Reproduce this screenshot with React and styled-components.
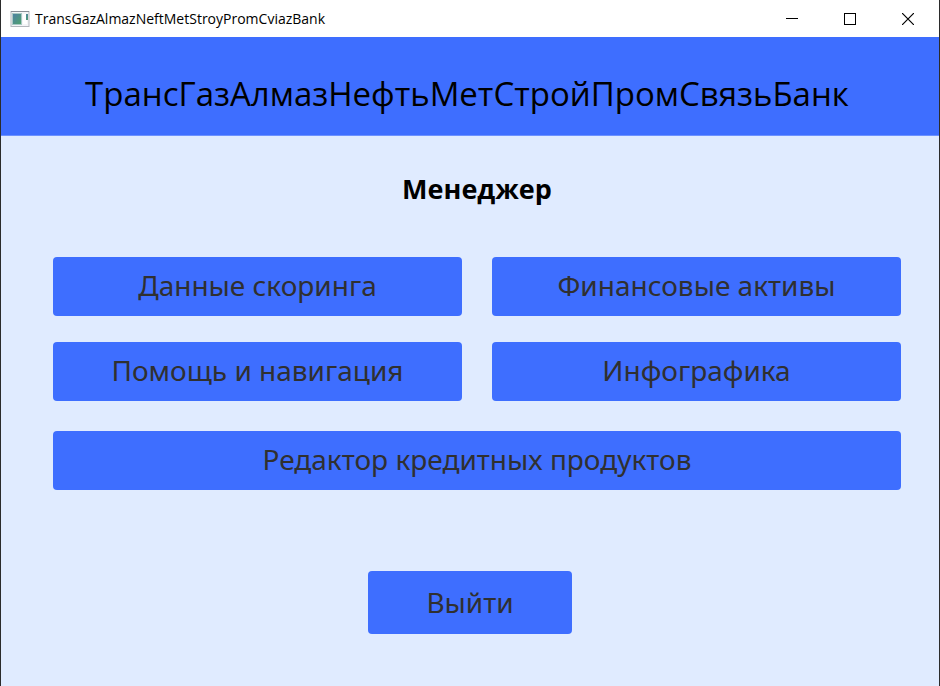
import React from "react";
import styled, { createGlobalStyle } from "styled-components";

const GlobalStyle = createGlobalStyle`
  * { box-sizing: border-box; }
  body { margin: 0; background: #e0ebff; }
`;

const Window = styled.div`
  display: flex;
  flex-direction: column;
  min-height: 100vh;
  border: 1px solid #2b2b2b;
  border-width: 0 1px;
  background: #e0ebff;
  color: #000;
`;

const TitleBar = styled.header`
  display: flex;
  align-items: center;
  height: 37px;
  padding: 0 2px 0 9px;
  background: #fff;
`;

const WindowTitle = styled.span`
  flex: 1;
  margin-left: 5px;
  font: 14px/20px "Open Sans", "Noto Sans", sans-serif;
`;

const WindowButton = styled.button`
  display: flex;
  align-items: center;
  justify-content: center;
  width: 58px;
  height: 36px;
  padding: 0;
  border: 0;
  background: transparent;
`;

const Banner = styled.div`
  display: flex;
  align-items: center;
  justify-content: center;
  height: 99px;
  padding: 18px 6px 0 0;
  border-bottom: 1px solid #6c91ff;
  background: #3e6eff;
`;

const BankName = styled.h1`
  margin: 0;
  font: 400 33px/48px "Comic Sans MS", "Comic Neue", "Open Sans", sans-serif;
  white-space: nowrap;
`;

const Content = styled.main`
  padding: 33px 38px 0 52px;
`;

const Role = styled.h2`
  margin: 0;
  font: 700 27px/44px "Comic Sans MS", "Comic Neue", "Open Sans", sans-serif;
  text-align: center;
`;

const Menu = styled.nav`
  display: grid;
  grid-template-columns: 1fr 1fr;
  gap: 26px 30px;
  margin-top: 44px;
`;

const ActionButton = styled.button`
  grid-column: ${(p) => (p.$wide ? "1 / -1" : "auto")};
  height: 59px;
  margin-top: ${(p) => (p.$wide ? "4px" : "0")};
  padding: 0 0 4px;
  border: 0;
  border-radius: 4px;
  background: #3e6eff;
  color: #303030;
  font: 28px "Noto Sans", sans-serif;
`;

const Footer = styled.footer`
  display: flex;
  justify-content: center;
  padding: 81px 0 52px;
`;

const ExitButton = styled(ActionButton)`
  width: 204px;
  height: 63px;
  padding: 0 0 2px;
`;

export default function App() {
  return (
    <>
      <GlobalStyle />
      <Window>
        <TitleBar>
          <svg width="20" height="16" viewBox="0 0 20 16" aria-hidden="true">
            <defs>
              <linearGradient id="pane" x1="0" y1="0" x2="1" y2="1">
                <stop offset="0" stopColor="#4f7fa6" />
                <stop offset="1" stopColor="#4fa36c" />
              </linearGradient>
            </defs>
            <rect x="1" y=".5" width="18" height="15" fill="#f4f5f7" stroke="#b4b7bd" />
            <path d="M1 .5h18" stroke="#8b8f96" />
            <rect x="2.5" y="2.5" width="9" height="11" fill="url(#pane)" stroke="#a9c9c4" />
            <rect x="13" y="3" width="4" height="10" fill="#fff" />
            <rect x="16" y="3" width="2" height="6" fill="url(#pane)" />
          </svg>
          <WindowTitle>TransGazAlmazNeftMetStroyPromCviazBank</WindowTitle>
          <WindowButton aria-label="Minimize">
            <svg width="12" height="12" viewBox="0 0 12 12"><path d="M0 5.5h12" stroke="#000" /></svg>
          </WindowButton>
          <WindowButton aria-label="Maximize">
            <svg width="12" height="12" viewBox="0 0 12 12"><rect x=".5" y=".5" width="11" height="11" fill="none" stroke="#000" /></svg>
          </WindowButton>
          <WindowButton aria-label="Close">
            <svg width="12" height="12" viewBox="0 0 12 12"><path d="M0 0l12 12M12 0L0 12" stroke="#000" strokeWidth="1.2" /></svg>
          </WindowButton>
        </TitleBar>
        <Banner><BankName>ТрансГазАлмазНефтьМетСтройПромСвязьБанк</BankName></Banner>
        <Content>
          <Role>Менеджер</Role>
          <Menu>
            <ActionButton>Данные скоринга</ActionButton>
            <ActionButton>Финансовые активы</ActionButton>
            <ActionButton>Помощь и навигация</ActionButton>
            <ActionButton>Инфографика</ActionButton>
            <ActionButton $wide>Редактор кредитных продуктов</ActionButton>
          </Menu>
        </Content>
        <Footer><ExitButton>Выйти</ExitButton></Footer>
      </Window>
    </>
  );
}
